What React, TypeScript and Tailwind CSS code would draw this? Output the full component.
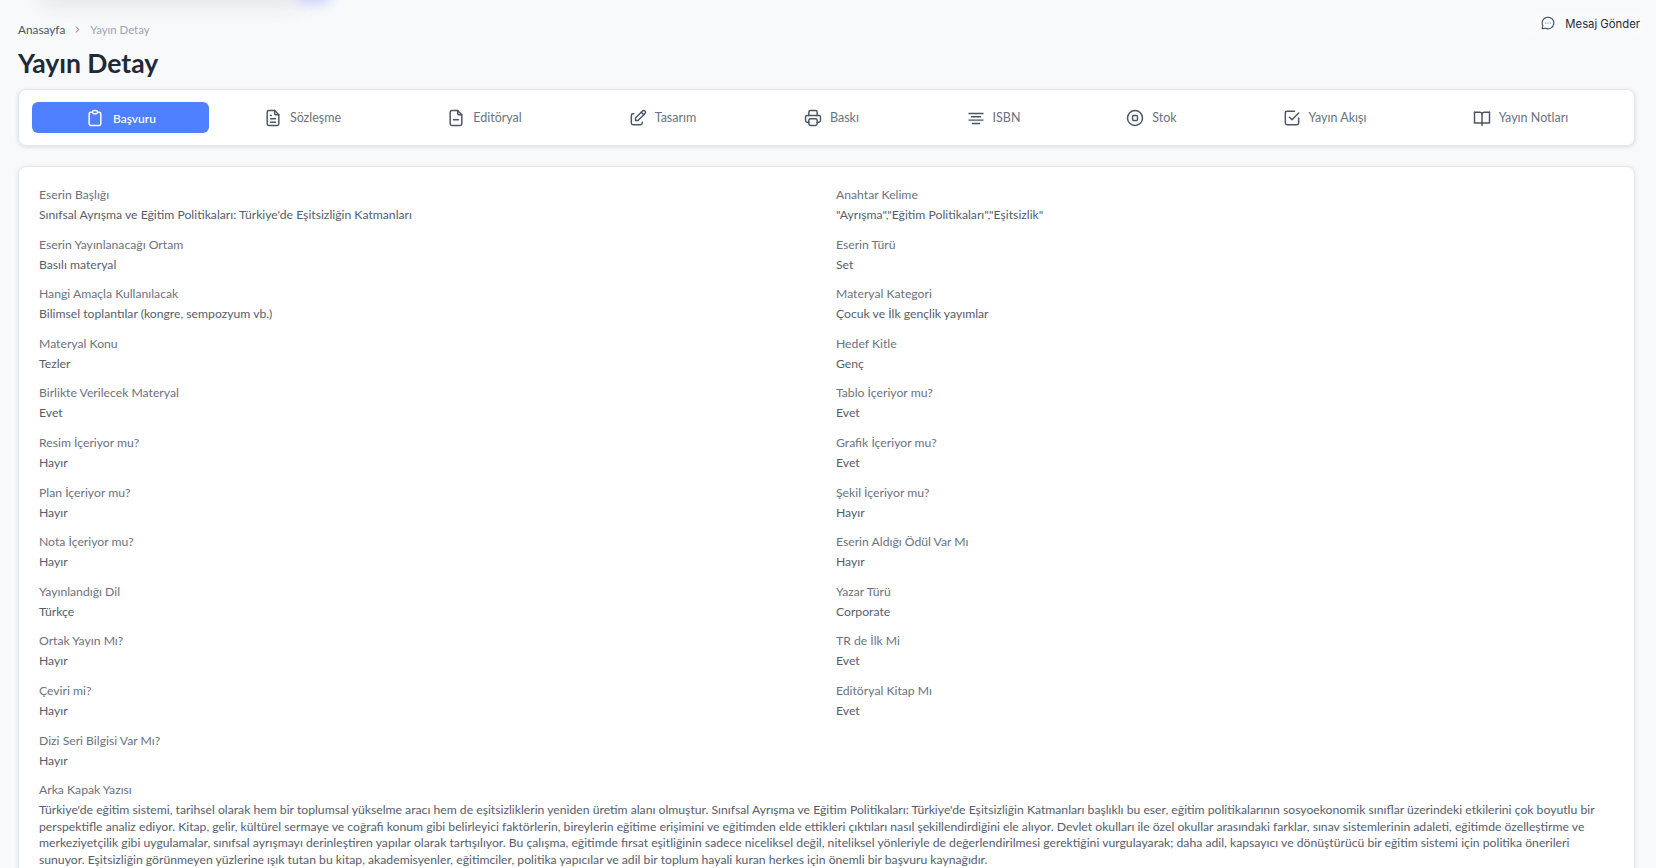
import React from "react";
import { TbClipboard, TbFileText, TbFileMinus, TbEdit, TbPrinter, TbCheckbox } from "react-icons/tb";
import { ChevronRight, MessageCircleMore } from "lucide-react";

type IconProps = { className?: string; strokeWidth?: number };

function StockIcon({ className }: IconProps) {
  return (
    <svg viewBox="0 0 24 24" fill="none" stroke="currentColor" strokeWidth="1.75" strokeLinecap="round" strokeLinejoin="round" className={className}>
      <circle cx="12" cy="12" r="9" />
      <rect x="9" y="9" width="6" height="6" rx="1.5" />
    </svg>
  );
}

function LinesIcon({ className }: IconProps) {
  return (
    <svg viewBox="0 0 24 24" fill="none" stroke="currentColor" strokeWidth="1.7" className={className}>
      <path d="M3 6.5h18M6 10.5h12M3 14.5h18M7 18.5h10" />
    </svg>
  );
}

function BookIcon({ className }: IconProps) {
  return (
    <svg viewBox="0 0 24 24" fill="none" stroke="currentColor" strokeWidth="1.75" strokeLinecap="round" strokeLinejoin="round" className={className}>
      <path d="M3 5h6.5A2.5 2.5 0 0 1 12 7.5V21" />
      <path d="M21 5h-6.5A2.5 2.5 0 0 0 12 7.5" />
      <path d="M3 5v13h9" />
      <path d="M21 5v13h-9" />
    </svg>
  );
}

const tabs = [
  { label: "Başvuru", Icon: TbClipboard, active: true },
  { label: "Sözleşme", Icon: TbFileText },
  { label: "Editöryal", Icon: TbFileMinus },
  { label: "Tasarım", Icon: TbEdit },
  { label: "Baskı", Icon: TbPrinter },
  { label: "ISBN", Icon: LinesIcon },
  { label: "Stok", Icon: StockIcon },
  { label: "Yayın Akışı", Icon: TbCheckbox },
  { label: "Yayın Notları", Icon: BookIcon },
];

const fields: [string, string][] = [
  ["Eserin Başlığı", "Sınıfsal Ayrışma ve Eğitim Politikaları: Türkiye'de Eşitsizliğin Katmanları"],
  ["Anahtar Kelime", "\"Ayrışma\",\"Eğitim Politikaları\",\"Eşitsizlik\""],
  ["Eserin Yayınlanacağı Ortam", "Basılı materyal"],
  ["Eserin Türü", "Set"],
  ["Hangi Amaçla Kullanılacak", "Bilimsel toplantılar (kongre, sempozyum vb.)"],
  ["Materyal Kategori", "Çocuk ve İlk gençlik yayımlar"],
  ["Materyal Konu", "Tezler"],
  ["Hedef Kitle", "Genç"],
  ["Birlikte Verilecek Materyal", "Evet"],
  ["Tablo İçeriyor mu?", "Evet"],
  ["Resim İçeriyor mu?", "Hayır"],
  ["Grafik İçeriyor mu?", "Evet"],
  ["Plan İçeriyor mu?", "Hayır"],
  ["Şekil İçeriyor mu?", "Hayır"],
  ["Nota İçeriyor mu?", "Hayır"],
  ["Eserin Aldığı Ödül Var Mı", "Hayır"],
  ["Yayınlandığı Dil", "Türkçe"],
  ["Yazar Türü", "Corporate"],
  ["Ortak Yayın Mı?", "Hayır"],
  ["TR de İlk Mi", "Evet"],
  ["Çeviri mi?", "Hayır"],
  ["Editöryal Kitap Mı", "Evet"],
  ["Dizi Seri Bilgisi Var Mı?", "Hayır"],
];

const lines = [
  "Türkiye'de eğitim sistemi, tarihsel olarak hem bir toplumsal yükselme aracı hem de eşitsizliklerin yeniden üretim alanı olmuştur. Sınıfsal Ayrışma ve Eğitim Politikaları: Türkiye'de Eşitsizliğin Katmanları başlıklı bu eser, eğitim politikalarının sosyoekonomik sınıflar üzerindeki etkilerini çok boyutlu bir",
  "perspektifle analiz ediyor. Kitap, gelir, kültürel sermaye ve coğrafi konum gibi belirleyici faktörlerin, bireylerin eğitime erişimini ve eğitimden elde ettikleri çıktıları nasıl şekillendirdiğini ele alıyor. Devlet okulları ile özel okullar arasındaki farklar, sınav sistemlerinin adaleti, eğitimde özelleştirme ve",
  "merkeziyetçilik gibi uygulamalar, sınıfsal ayrışmayı derinleştiren yapılar olarak tartışılıyor. Bu çalışma, eğitimde fırsat eşitliğinin sadece niceliksel değil, niteliksel yönleriyle de değerlendirilmesi gerektiğini vurgulayarak; daha adil, kapsayıcı ve dönüştürücü bir eğitim sistemi için politika önerileri",
  "sunuyor. Eşitsizliğin görünmeyen yüzlerine ışık tutan bu kitap, akademisyenler, eğitimciler, politika yapıcılar ve adil bir toplum hayali kuran herkes için önemli bir başvuru kaynağıdır.",
];

export default function App() {
  return (
    <div className="relative h-[868px] overflow-hidden bg-[#f8f9fb] pl-[18px] pr-[21px] font-['Lato','Liberation_Sans',sans-serif] text-[12.2px] text-[#4b5563]">
      <div className="absolute left-[40px] top-[-16px] h-[20px] w-[260px] rounded-full bg-[#dfe1e4] blur-[10px]" />
      <div className="absolute left-[295px] top-[-12px] h-[16px] w-[36px] rounded-full bg-[#c9d2fb] blur-[6px]" />

      <div className="absolute right-[12px] top-[10px] flex h-[29px] items-center gap-[10px] rounded-full bg-[#f9fafc] pl-[14px] pr-[4px]">
        <MessageCircleMore className="mb-[3px] h-[14px] w-[14px] text-[#374151]" strokeWidth={1.75} />
        <span className="font-['Inter',sans-serif] text-[11.3px] text-[#1f2937]">Mesaj Gönder</span>
      </div>

      <nav className="flex h-[59px] items-center text-[11.8px]">
        <span className="text-[#4b5563]">Anasayfa</span>
        <ChevronRight className="mx-[7px] h-[11px] w-[11px] text-[#6b7280]" />
        <span className="text-[11.4px] text-[#9ca3af]">Yayın Detay</span>
      </nav>

      <h1 className="mt-[-12px] h-[33px] text-[26.5px] font-bold leading-[33px] text-[#1f2937]">Yayın Detay</h1>

      <div className="mt-[9px] h-[57px] rounded-[8px] border border-[#e5e7eb] bg-white pl-[13px] pt-[12px] shadow-[0_1px_4px_rgba(0,0,0,0.12)]">
        <div className="grid grid-cols-[177px_186px_178px_178px_160px_164px_152px_194px_198px]">
          {tabs.map(({ label, Icon, active }) => (
            <div
              key={label}
              className={
                active
                  ? "flex h-[31px] items-center justify-center gap-[8px] rounded-[6px] bg-[#4f80ff] text-[12px] font-medium text-white"
                  : "flex h-[31px] items-center justify-center gap-[7px] text-[12.5px] text-[#6b7280]"
              }
            >
              <Icon strokeWidth={1.75} className={active ? "h-[20px] w-[20px]" : "h-[20px] w-[20px] text-[#4b5563]"} />
              <span className="pt-[2px]">{label}</span>
            </div>
          ))}
        </div>
      </div>

      <div className="mt-[20px] h-[760px] rounded-[8px] border border-[#e5e7eb] bg-white pl-[20px] pt-[18px] shadow-[0_1px_4px_rgba(0,0,0,0.1)]">
        <div className="grid grid-cols-[797px_1fr] auto-rows-[49.6px]">
          {fields.map(([k, v]) => (
            <div key={k}>
              <div className="h-[20px] leading-[20px] text-[#6b7280]">{k}</div>
              <div className="h-[20px] leading-[20px] text-[#565e6c]">{v}</div>
            </div>
          ))}
        </div>
        <div className="h-[20px] leading-[20px] text-[#6b7280]">Arka Kapak Yazısı</div>
        <div className="pt-[2px] text-[#565e6c]">
          {lines.map((l) => (
            <div key={l} className="h-[16.5px] whitespace-nowrap leading-[16.5px]">{l}</div>
          ))}
        </div>
      </div>
    </div>
  );
}
